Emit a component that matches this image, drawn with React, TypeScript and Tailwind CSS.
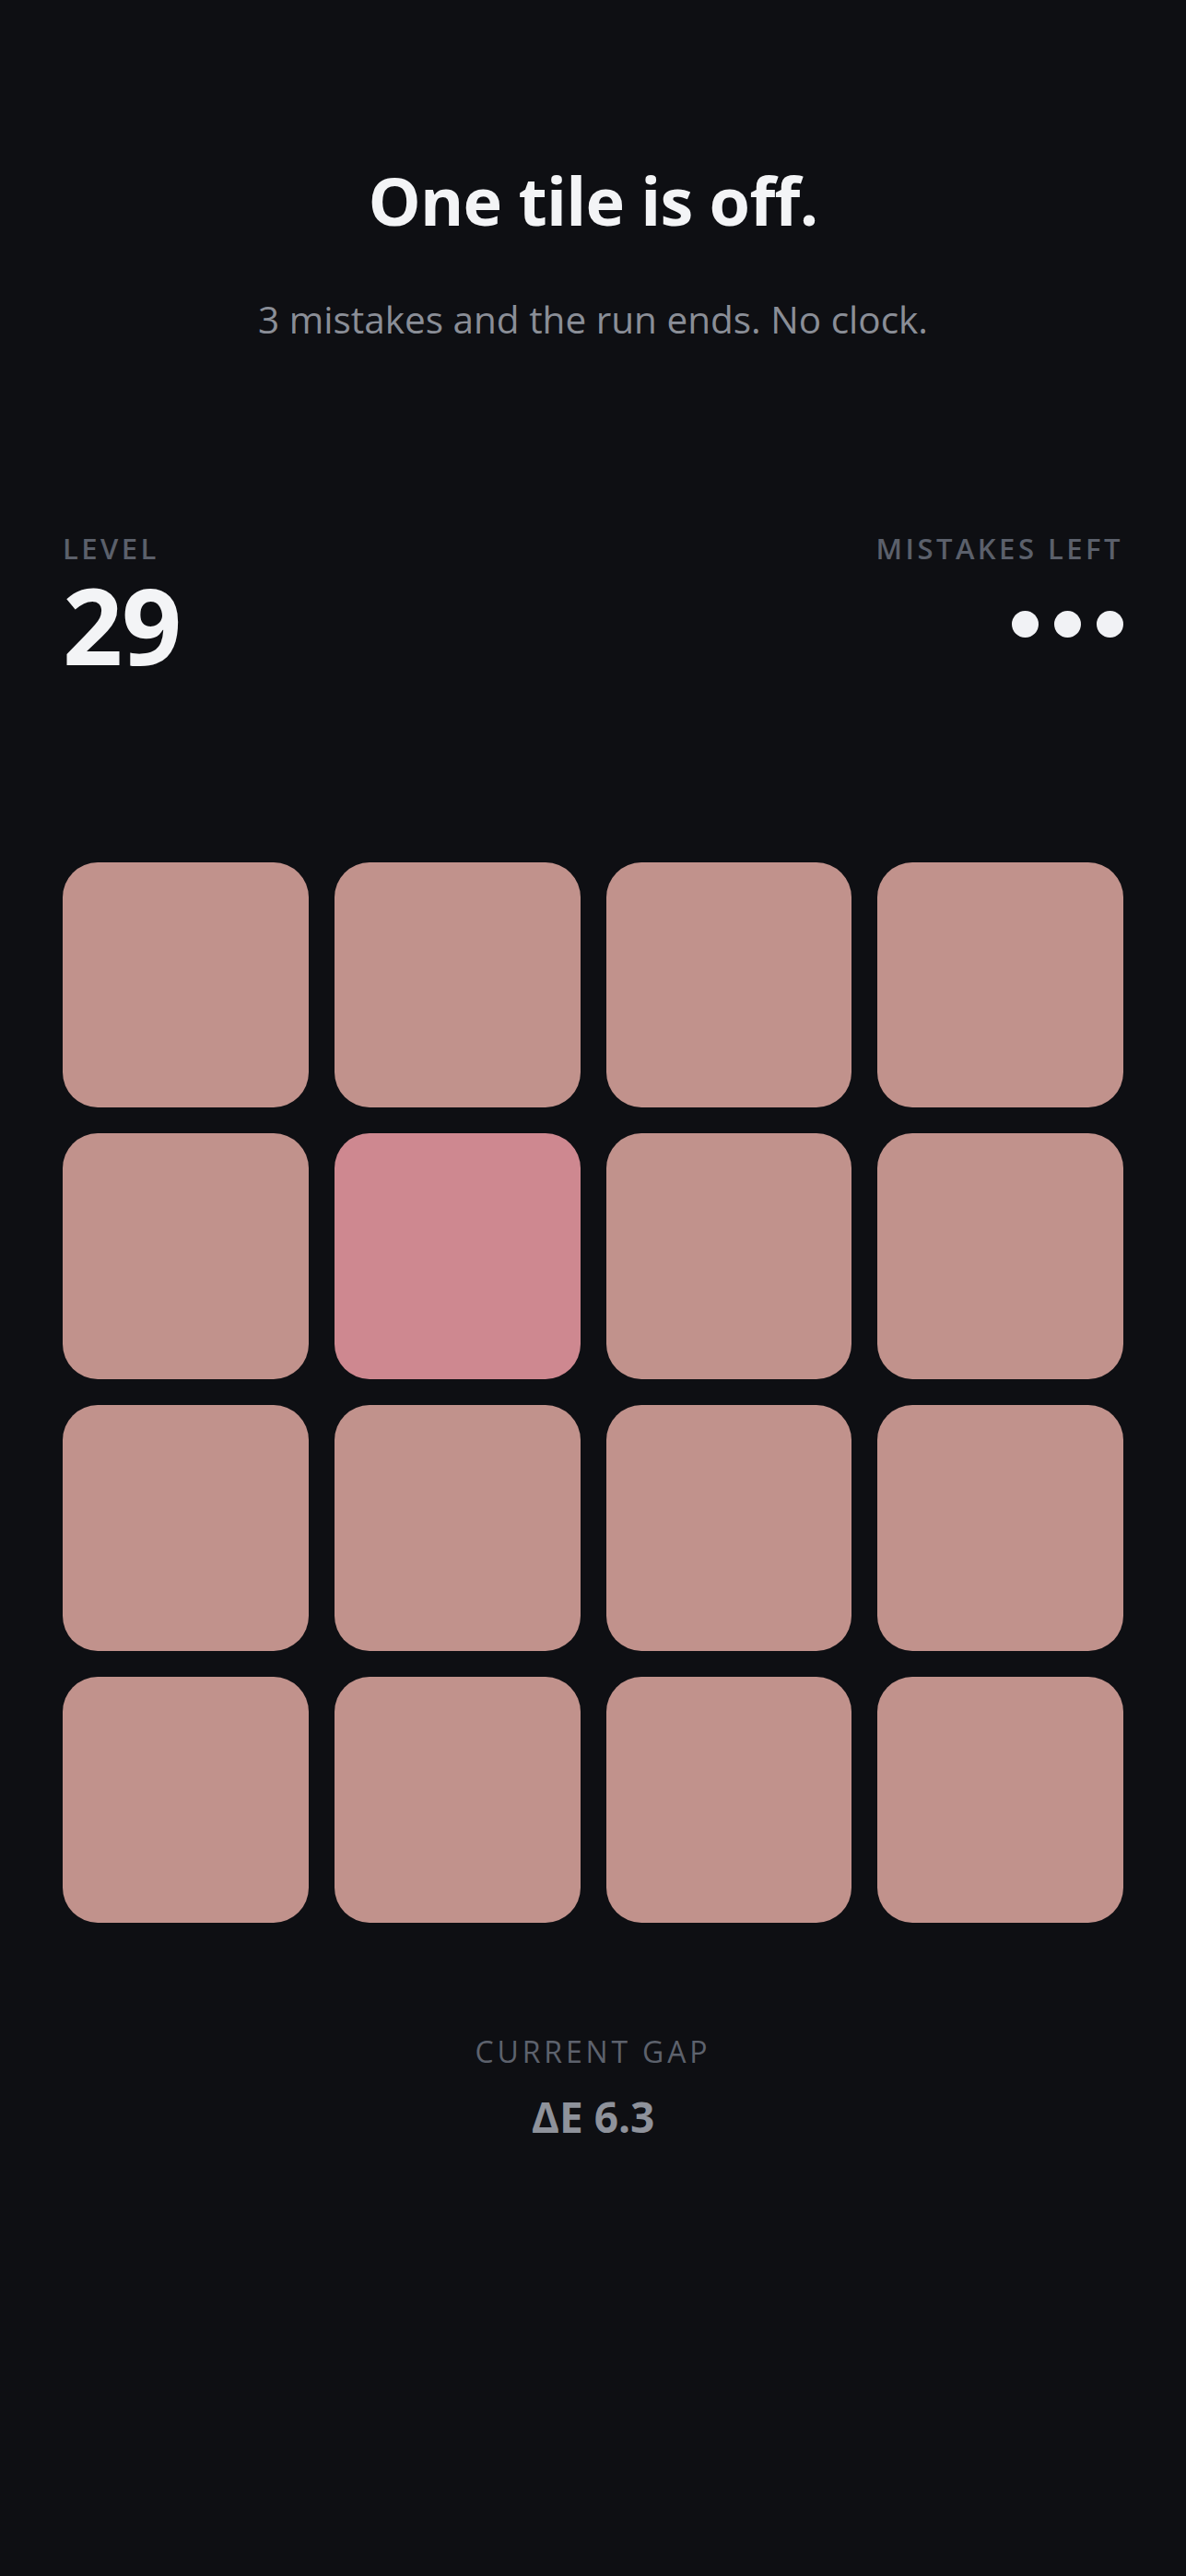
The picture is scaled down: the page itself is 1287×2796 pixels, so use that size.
import React from "react";

const TILE = "#c1928c";
const ODD = "#ce8890";

export default function App() {
  const oddIndex = 5;
  const tiles = Array.from({ length: 16 }, (_, i) => i);

  return (
    <div
      className="min-h-[2796px] bg-[#0e0f13] px-[68px] text-[#f3f4f6]"
      style={{ fontFamily: '"Open Sans", "Noto Sans", sans-serif' }}
    >
      <div className="flex flex-col items-center pt-[181px]">
        <h1 className="text-[72px] font-bold leading-none tracking-[-0.01em]">
          One tile is off.
        </h1>
        <p className="mt-[74px] text-[40.5px] leading-none text-[#8a8e97]">
          3 mistakes and the run ends. No clock.
        </p>
      </div>

      <div className="mt-[212px] flex items-start justify-between">
        <div className="flex flex-col">
          <span className="text-[31px] font-semibold uppercase leading-none tracking-[0.11em] text-[#5b606b]">
            Level
          </span>
          <span className="mt-[10px] text-[114px] font-bold leading-none tracking-[-0.01em]">
            29
          </span>
        </div>
        <div className="flex flex-col items-end">
          <span className="text-[31px] font-semibold uppercase leading-none tracking-[0.112em] text-[#5b606b]">
            Mistakes left
          </span>
          <div className="mt-[10px] flex h-[114px] items-center gap-[17px]">
            <span className="h-[29px] w-[29px] rounded-full bg-[#f1f2f5]" />
            <span className="h-[29px] w-[29px] rounded-full bg-[#f1f2f5]" />
            <span className="h-[29px] w-[29px] rounded-full bg-[#f1f2f5]" />
          </div>
        </div>
      </div>

      <div className="mt-[201px] grid grid-cols-4 gap-[28px]">
        {tiles.map((i) => (
          <button
            key={i}
            className="aspect-square rounded-[38px]"
            style={{ backgroundColor: i === oddIndex ? ODD : TILE }}
          />
        ))}
      </div>

      <div className="mt-[124px] flex flex-col items-center">
        <span className="text-[32px] uppercase leading-none tracking-[0.12em] text-[#5d626d]">
          Current gap
        </span>
        <span className="mt-[31px] text-[46px] font-bold leading-none text-[#8e929b]">
          ΔE 6.3
        </span>
      </div>
    </div>
  );
}
